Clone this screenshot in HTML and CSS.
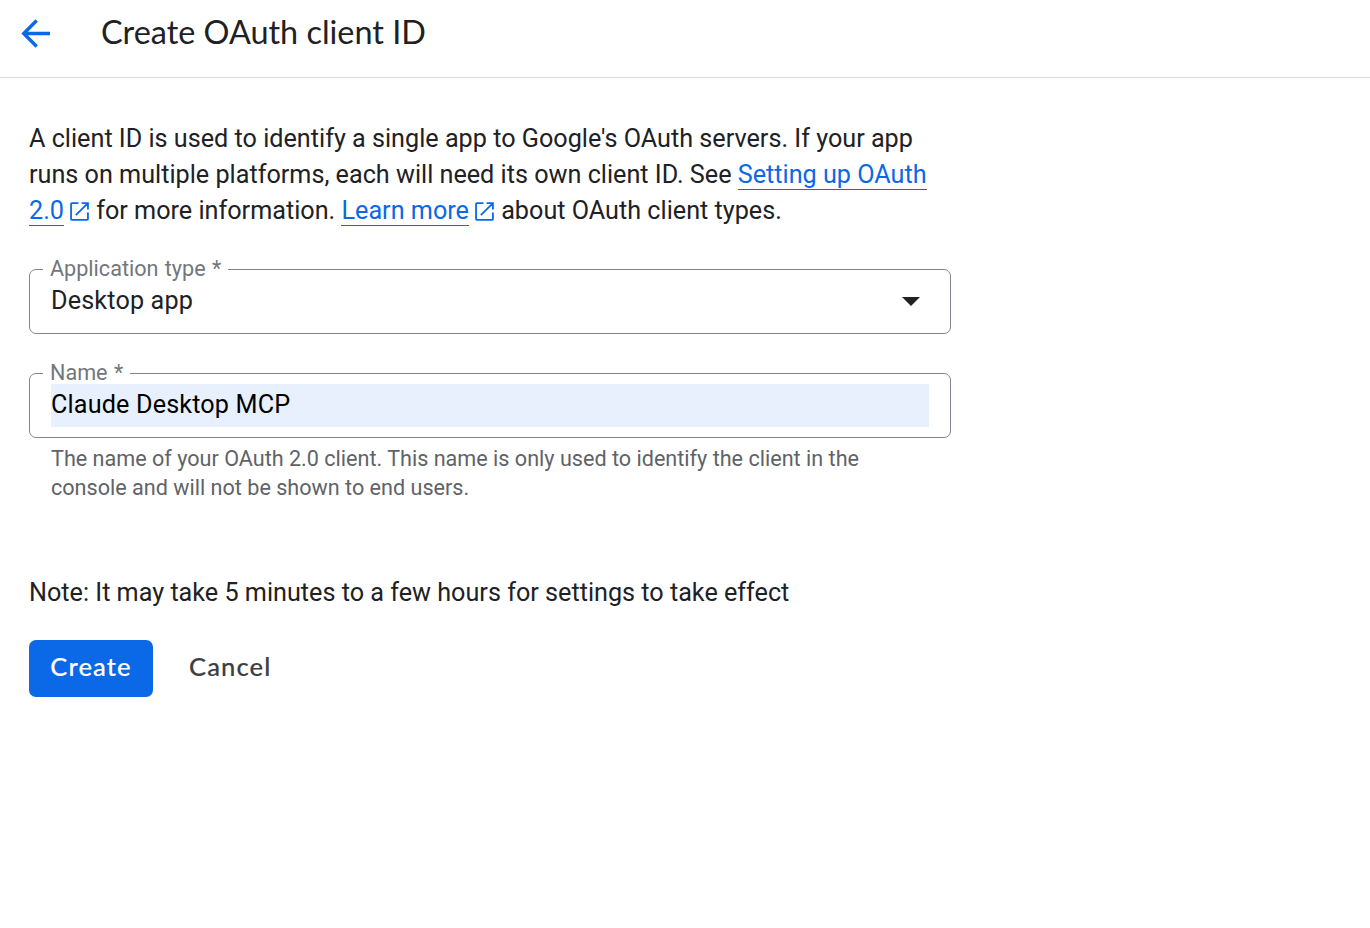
FILE: index.html
```html
<!DOCTYPE html>
<html lang="en">
<head>
    <meta charset="UTF-8">
    <meta name="viewport" content="width=device-width, initial-scale=1.0">
    <title>Create OAuth client ID</title>
    <link rel="stylesheet" href="styles.css">
</head>
<body>

    <header class="page-header">
        <a class="back-link" href="#" aria-label="Back">
            <svg class="back-icon" viewBox="0 0 29 29">
                <path d="M29 14.5H3M15.7 1.5L2.7 14.5L15.7 27.5" fill="none" stroke="currentColor" stroke-width="3.4"/>
            </svg>
        </a>
        <h1>Create OAuth client ID</h1>
    </header>

    <main class="content">
        <p class="intro">A client ID is used to identify a single app to Google's OAuth servers. If your app runs on multiple platforms, each will need its own client ID. See <a class="link" href="#">Setting up OAuth 2.0</a><svg class="external-icon" viewBox="0 0 18 18"><path d="M8 1H2Q1 1 1 2V16Q1 17 2 17H16Q17 17 17 16V10M11 1H17V7M17 1L5.5 12.5" fill="none" stroke="currentColor" stroke-width="1.7"/></svg> for more information. <a class="link" href="#">Learn more</a><svg class="external-icon" viewBox="0 0 18 18"><path d="M8 1H2Q1 1 1 2V16Q1 17 2 17H16Q17 17 17 16V10M11 1H17V7M17 1L5.5 12.5" fill="none" stroke="currentColor" stroke-width="1.7"/></svg> about OAuth client types.</p>

        <form class="client-form">
            <div class="field">
                <span class="field-label">Application type *</span>
                <div class="select-value">Desktop app</div>
                <svg class="select-arrow" viewBox="0 0 18 9"><path d="M0 0H18L9 9Z" fill="currentColor"/></svg>
            </div>

            <div class="field">
                <label class="field-label" for="client-name">Name *</label>
                <input class="field-input" id="client-name" type="text" value="Claude Desktop MCP">
            </div>
            <p class="hint">The name of your OAuth 2.0 client. This name is only used to identify the client in the console and will not be shown to end users.</p>

            <p class="note">Note: It may take 5 minutes to a few hours for settings to take effect</p>

            <div class="actions">
                <button class="btn btn-primary" type="button">Create</button>
                <button class="btn" type="button">Cancel</button>
            </div>
        </form>
    </main>

</body>
</html>
```
FILE: styles.css
```css
* {
    box-sizing: border-box;
}

body {
    margin: 0;
    font-family: Roboto, sans-serif;
    font-size: 25.2px;
    line-height: 36px;
    color: #202124;
    background: #fff;
}

p {
    margin: 0;
}

/* Header */
.page-header {
    display: flex;
    align-items: center;
    height: 78px;
    padding: 0 21px 10px;
    border-bottom: 1px solid #dadce0;
}

.back-link {
    display: flex;
    margin-right: 51px;
    color: #0b68e6;
}

.back-icon {
    width: 29px;
    height: 29px;
}

h1 {
    margin: 0;
    padding-bottom: 3px;
    font-family: "Google Sans", Lato, sans-serif;
    font-size: 32.4px;
    font-weight: 400;
}

/* Content */
.content {
    width: 980px;
    padding: 43px 29px;
}

.link {
    color: #0b68e6;
    text-decoration: none;
    border-bottom: 1px solid #0b68e6;
}

.external-icon {
    width: 19px;
    height: 19px;
    margin: 0 1px 0 6px;
    vertical-align: -2px;
    color: #0b68e6;
}

/* Form fields */
.field {
    position: relative;
    display: flex;
    align-items: center;
    justify-content: space-between;
    height: 65px;
    margin-top: 39px;
    padding: 0 21px;
    border: 1px solid #80868b;
    border-radius: 7px;
    letter-spacing: 0.15px;
}

.intro {
    margin-bottom: 40px;
}

/* Label sits over the top border */
.field-label {
    position: absolute;
    top: -15px;
    left: 13px;
    padding: 0 7px;
    font-size: 21.6px;
    line-height: 28px;
    letter-spacing: 0;
    word-spacing: 1px;
    color: #72777c;
    background: #fff;
}

.select-value {
    padding-bottom: 2px;
}

.select-arrow {
    width: 18px;
    height: 9px;
    margin-right: 9px;
}

.field-input {
    position: relative;
    width: 100%;
    height: 43px;
    padding: 0 0 2px;
    border: 0;
    font: inherit;
    letter-spacing: inherit;
    color: #000;
    background: #e8f0fe;
}

.hint {
    padding: 6px 22px 0;
    font-size: 21.6px;
    line-height: 29px;
    color: #5f6368;
}

.note {
    margin-top: 73px;
}

/* Buttons */
.actions {
    display: flex;
    gap: 15px;
    margin-top: 29px;
}

.btn {
    height: 57px;
    padding: 0 21px 5px;
    border: 0;
    border-radius: 7px;
    font-family: "Google Sans", Lato, sans-serif;
    font-size: 25.6px;
    font-weight: 500;
    letter-spacing: 1.1px;
    -webkit-text-stroke: 0.15px currentColor;
    color: #3c4043;
    background: none;
}

.btn-primary {
    width: 124px;
    color: #fff;
    background: #0b68e6;
}
```
